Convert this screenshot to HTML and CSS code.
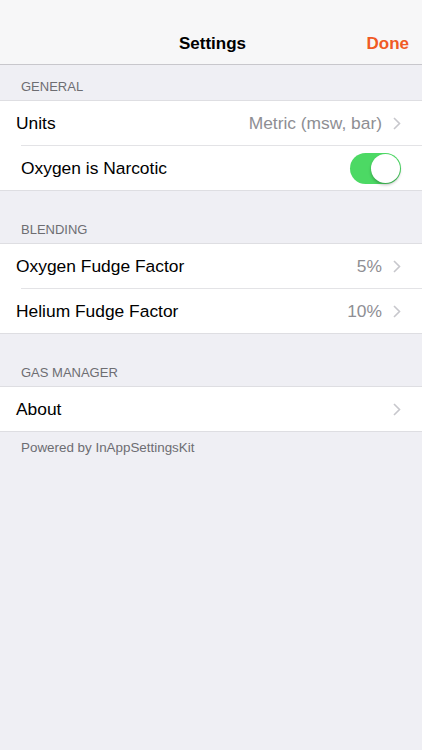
FILE: index.html
```html
<!DOCTYPE html>
<html lang="en">
<head>
  <meta charset="UTF-8">
  <title>Settings</title>
  <link rel="stylesheet" href="styles.css">
</head>
<body>
  <header class="navbar">
    <div class="nav-side"></div>
    <h1 class="nav-title">Settings</h1>
    <div class="nav-side nav-right"><button class="done">Done</button></div>
  </header>

  <section class="group">
    <h2 class="group-title first">GENERAL</h2>
    <ul class="cells">
      <li class="cell">
        <span class="label">Units</span>
        <span class="value">Metric (msw, bar)</span>
        <svg class="chevron" width="8" height="13" viewBox="0 0 8 13"><path d="M1 1l5.5 5.5L1 12" fill="none" stroke="#c7c7cc" stroke-width="1.6"/></svg>
      </li>
      <li class="cell indent">
        <span class="label">Oxygen is Narcotic</span>
        <span class="switch on"><span class="knob"></span></span>
      </li>
    </ul>
  </section>

  <section class="group">
    <h2 class="group-title">BLENDING</h2>
    <ul class="cells">
      <li class="cell">
        <span class="label">Oxygen Fudge Factor</span>
        <span class="value">5%</span>
        <svg class="chevron" width="8" height="13" viewBox="0 0 8 13"><path d="M1 1l5.5 5.5L1 12" fill="none" stroke="#c7c7cc" stroke-width="1.6"/></svg>
      </li>
      <li class="cell">
        <span class="label">Helium Fudge Factor</span>
        <span class="value">10%</span>
        <svg class="chevron" width="8" height="13" viewBox="0 0 8 13"><path d="M1 1l5.5 5.5L1 12" fill="none" stroke="#c7c7cc" stroke-width="1.6"/></svg>
      </li>
    </ul>
  </section>

  <section class="group">
    <h2 class="group-title">GAS MANAGER</h2>
    <ul class="cells">
      <li class="cell">
        <span class="label">About</span>
        <span class="value"></span>
        <svg class="chevron" width="8" height="13" viewBox="0 0 8 13"><path d="M1 1l5.5 5.5L1 12" fill="none" stroke="#c7c7cc" stroke-width="1.6"/></svg>
      </li>
    </ul>
    <p class="group-footer">Powered by InAppSettingsKit</p>
  </section>
</body>
</html>
```

FILE: styles.css
```css
body {
  margin: 0;
  background: #efeff4;
  font-family: "Liberation Sans", Arial, sans-serif;
  color: #000;
  height: 750px;
}
.navbar {
  height: 65px;
  background: #f7f7f8;
  border-bottom: 1px solid #c8c7cc;
  display: flex;
  align-items: center;
  padding: 20px 13px 0 16px;
  box-sizing: border-box;
}
.nav-side {
  flex: 1;
}
.nav-right {
  display: flex;
  justify-content: flex-end;
}
.nav-title {
  margin: 0;
  font-size: 17px;
  font-weight: bold;
  position: relative;
  top: 2px;
}
.done {
  border: 0;
  background: none;
  padding: 0;
  font-family: inherit;
  font-size: 17px;
  font-weight: bold;
  color: #f05a24;
  position: relative;
  top: 2px;
}
.group-title {
  margin: 0;
  padding: 31px 21px 5px;
  font-size: 13px;
  line-height: 16px;
  font-weight: normal;
  color: #6d6d72;
}
.group-title.first {
  padding-top: 14px;
  padding-bottom: 5px;
}
.cells {
  list-style: none;
  margin: 0;
  padding: 0;
  background: #fff;
  border-top: 1px solid #dedee2;
  border-bottom: 1px solid #dedee2;
}
.cell {
  height: 44px;
  display: flex;
  align-items: center;
  padding: 0 21px 0 16px;
  font-size: 17.4px;
  position: relative;
}
/* hairline between rows, inset from the left edge */
.cell + .cell {
  margin-top: 1px;
}
.cell + .cell::before {
  content: "";
  position: absolute;
  top: -1px;
  left: 21px;
  right: 0;
  height: 1px;
  background: #e3e3e6;
}
.cell.indent {
  padding-left: 21px;
}
.label {
  flex: 1;
}
.value {
  color: #8e8e93;
  margin-right: 11px;
}
.chevron {
  display: block;
}
.switch {
  width: 51px;
  height: 31px;
  border-radius: 16px;
  background: #4cd964;
  position: relative;
}
.switch .knob {
  position: absolute;
  top: 1px;
  right: 1px;
  width: 29px;
  height: 29px;
  border-radius: 50%;
  background: #fff;
  box-shadow: 0 2px 3px rgba(0,0,0,0.25);
}
.group-footer {
  margin: 0;
  padding: 8px 21px;
  font-size: 13.4px;
  line-height: 16px;
  color: #6d6d72;
}
```
